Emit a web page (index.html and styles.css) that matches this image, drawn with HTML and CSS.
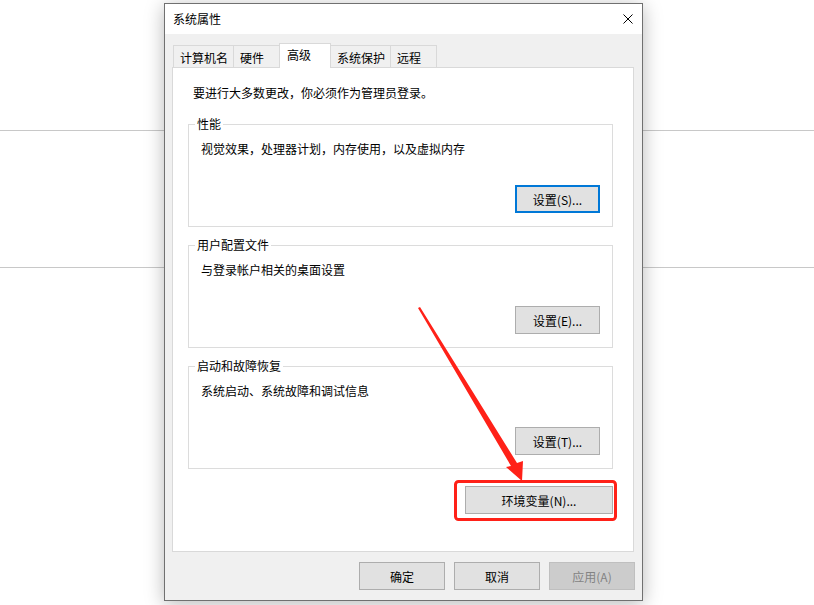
FILE: index.html
```html
<!DOCTYPE html>
<html lang="zh-CN">
<head>
    <meta charset="UTF-8">
    <meta name="viewport" content="width=device-width, initial-scale=1.0">
    <title>系统属性</title>
    <link rel="stylesheet" href="styles.css">
</head>
<body>
    <div class="backdrop"></div>

    <div class="dialog">
        <div class="titlebar">
            <span class="title">系统属性</span>
            <svg class="close" width="10" height="10" viewBox="0 0 10 10">
                <path d="M0.5 0.5 L9.5 9.5 M9.5 0.5 L0.5 9.5" stroke="#000" stroke-width="1" fill="none"/>
            </svg>
        </div>

        <div class="dialog-body">
            <div class="tabs">
                <div class="tab wide-tab">计算机名</div>
                <div class="tab">硬件</div>
                <div class="tab active">高级</div>
                <div class="tab">系统保护</div>
                <div class="tab">远程</div>
            </div>

            <div class="panel">
                <p class="note">要进行大多数更改，你必须作为管理员登录。</p>

                <fieldset class="group">
                    <legend>性能</legend>
                    <p>视觉效果，处理器计划，内存使用，以及虚拟内存</p>
                    <div class="group-actions">
                        <button class="btn focused">设置(S)...</button>
                    </div>
                </fieldset>

                <fieldset class="group">
                    <legend>用户配置文件</legend>
                    <p>与登录帐户相关的桌面设置</p>
                    <div class="group-actions">
                        <button class="btn">设置(E)...</button>
                    </div>
                </fieldset>

                <fieldset class="group">
                    <legend>启动和故障恢复</legend>
                    <p>系统启动、系统故障和调试信息</p>
                    <div class="group-actions">
                        <button class="btn">设置(T)...</button>
                    </div>
                </fieldset>

                <div class="env-row">
                    <button class="btn env-btn">环境变量(N)...</button>
                </div>
            </div>

            <div class="footer">
                <button class="btn footer-btn">确定</button>
                <button class="btn footer-btn">取消</button>
                <button class="btn footer-btn" disabled>应用(A)</button>
            </div>
        </div>
    </div>

    <!-- red annotation drawn over the screenshot -->
    <svg class="annotation" width="814" height="605" viewBox="0 0 814 605">
        <rect x="455.5" y="481.5" width="160" height="38" rx="3" ry="3" fill="none" stroke="#ff2118" stroke-width="3"/>
        <polygon points="418,308 420,307 517,463 523,461 522,481 506,467 511,466" fill="#ff2118"/>
    </svg>
</body>
</html>
```

FILE: styles.css
```css
/* Basic styling */
body {
    margin: 0;
    background: #fff;
    font-family: "Noto Sans CJK SC", "Microsoft YaHei", sans-serif;
    font-size: 12px;
    line-height: 16px;
    color: #000;
    overflow: hidden;
}
p {
    margin: 0;
}

/* settings page behind the dialog */
.backdrop {
    margin-top: 130px;
    height: 136px;
    border-top: 1px solid #c8c8c8;
    border-bottom: 1px solid #c8c8c8;
}

/* dialog window */
.dialog {
    position: absolute;
    left: 164px;
    top: 3px;
    width: 479px;
    height: 598px;
    box-sizing: border-box;
    border: 1px solid #707070;
    background: #f0f0f0;
    box-shadow: 0 3px 18px rgba(0, 0, 0, 0.28);
}
.titlebar {
    height: 30px;
    background: #fff;
    display: flex;
    align-items: center;
    justify-content: space-between;
    padding: 0 9px 0 8px;
}
.close {
    display: block;
    margin-top: -1px;
}
.dialog-body {
    padding: 9px 8px 0 7px;
}

/* tabs */
.tabs {
    display: flex;
    align-items: flex-end;
    margin-left: 1px;
}
.tab {
    position: relative;
    height: 22px;
    min-width: 47px;
    box-sizing: border-box;
    padding: 4px 5px 0 6px;
    border: 1px solid #d9d9d9;
    border-bottom: none;
    background: #f0f0f0;
    white-space: nowrap;
}
.tab + .tab {
    margin-left: -1px;
}
.tab.active {
    height: 25px;
    min-width: 52px;
    padding: 3px 5px 0 7px;
    margin-bottom: -1px;
    background: #fff;
    z-index: 1;
}

.panel {
    height: 485px;
    box-sizing: border-box;
    border: 1px solid #d9d9d9;
    background: #fff;
    padding: 17px 20px 0 15px;
}
.note {
    margin-left: 5px;
    margin-bottom: 15px;
}

/* group boxes */
.group {
    margin: 0 0 10px;
    min-width: 0;
    padding: 0 12px 13px 12px;
    border: 1px solid #dcdcdc;
}
.group legend {
    margin-left: -6px;
    padding: 0 2px;
    line-height: 16px;
}
.group p {
    margin-top: 9px;
}
.group-actions {
    display: flex;
    justify-content: flex-end;
    margin-top: 28px;
}

/* buttons */
.btn {
    height: 28px;
    width: 85px;
    box-sizing: border-box;
    padding: 0;
    border: 1px solid #adadad;
    background: #e1e1e1;
    font-family: inherit;
    font-size: 12px;
    color: #000;
}
.btn.focused {
    border: 2px solid #0078d7;
}
.btn:disabled {
    background: #cccccc;
    border-color: #bfbfbf;
    color: #838383;
}
.env-row {
    display: flex;
    justify-content: flex-end;
    margin-top: 17px;
}
.env-btn {
    width: 148px;
}
.footer {
    display: flex;
    justify-content: flex-end;
    gap: 9px;
    margin-right: -1px;
    padding: 10px 0 10px 0;
}
.footer-btn {
    width: 86px;
}

.annotation {
    position: absolute;
    left: 0;
    top: 0;
    pointer-events: none;
}
```
